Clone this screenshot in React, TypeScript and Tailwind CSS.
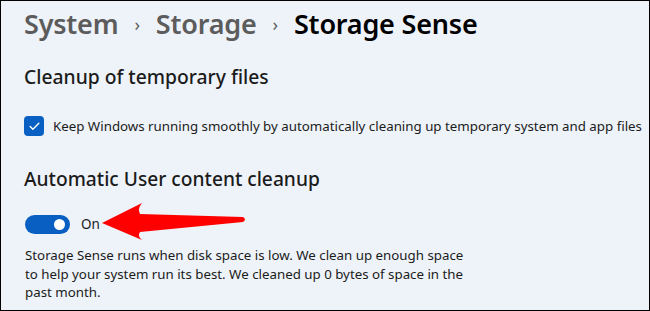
import { Check } from "lucide-react";

export default function App() {
  return (
    <div
      className="relative w-[650px] h-[311px] overflow-hidden border border-black bg-[#eef3f9] text-[#1b1b1b]"
      style={{ fontFamily: '"Noto Sans", "Open Sans", sans-serif' }}
    >
      <div className="flex flex-col pl-[23px] pt-[3px]">
        <div className="flex items-center h-[40px] text-[27px] font-semibold tracking-[-0.2px]">
          <span className="text-[#5c5c5c]">System</span>
          <span className="mx-[16px] text-[18px] font-normal text-[#5c5c5c]">›</span>
          <span className="text-[#5c5c5c]">Storage</span>
          <span className="mx-[16px] text-[18px] font-normal text-[#5c5c5c]">›</span>
          <span className="text-black">Storage Sense</span>
        </div>

        <h2 className="mt-[19px] text-[19.3px] font-medium leading-[28px]">
          Cleanup of temporary files
        </h2>

        <div className="mt-[25px] flex items-center gap-[9px]">
          <div className="flex h-[20px] w-[20px] items-center justify-center rounded-[4px] bg-[#0a5fc2]">
            <Check className="h-[13px] w-[13px] text-white" strokeWidth={2.5} />
          </div>
          <span className="text-[13.3px] leading-[20px]">
            Keep Windows running smoothly by automatically cleaning up temporary system and app files
          </span>
        </div>

        <h2 className="mt-[29px] text-[19.2px] font-medium leading-[28px]">
          Automatic User content cleanup
        </h2>

        <div className="mt-[21px] ml-[1px] flex items-center gap-[11px]">
          <div className="flex h-[19px] w-[45px] items-center justify-end rounded-full bg-[#0a5fc2] pr-[5px]">
            <div className="h-[11px] w-[11px] rounded-full bg-white" />
          </div>
          <span className="text-[13.5px] leading-[20px]">On</span>
        </div>

        <p className="mt-[12px] ml-[1px] text-[13.3px] leading-[18.5px]">
          Storage Sense runs when disk space is low. We clean up enough space
          <br />
          to help your system run its best. We cleaned up 0 bytes of space in the
          <br />
          past month.
        </p>
      </div>

      <svg
        className="absolute left-0 top-0"
        width="650"
        height="311"
        viewBox="0 0 650 311"
      >
        <path
          d="M101 222 L141 202 Q136 208 139 213 L242 216 Q246 218.5 242 221 L139 231 Q136 235 141 239 Z"
          fill="#ff0000"
        />
      </svg>
    </div>
  );
}
